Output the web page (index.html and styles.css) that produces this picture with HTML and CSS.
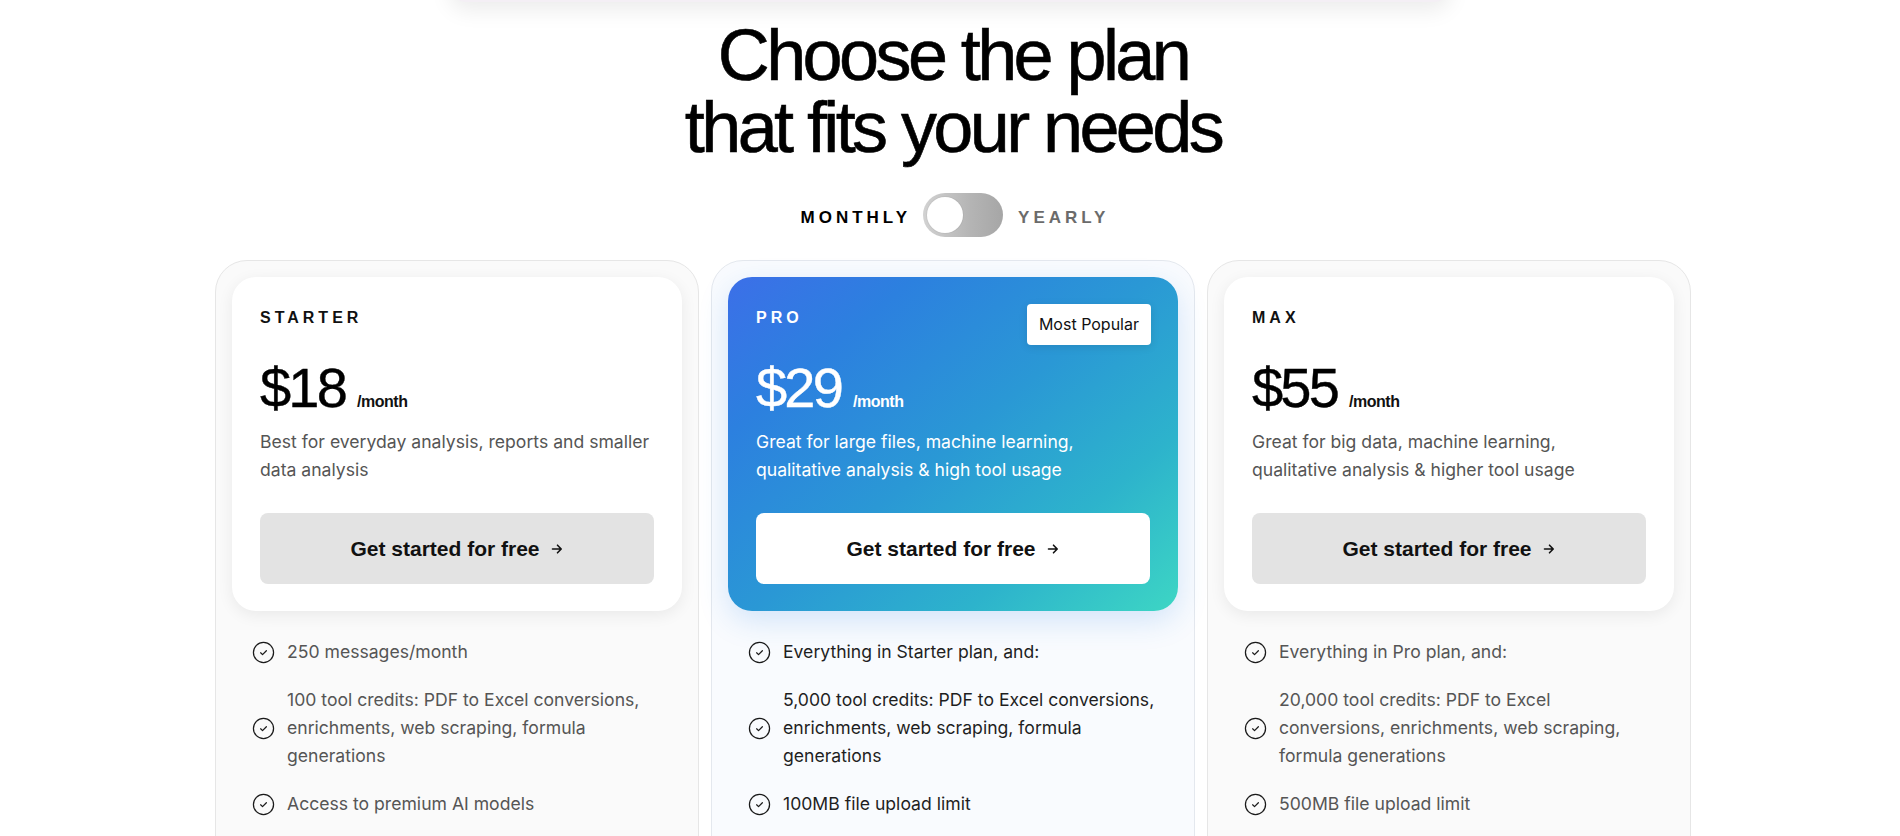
FILE: index.html
```html
<!DOCTYPE html>
<html lang="en">
<head>
<meta charset="utf-8">
<title>Pricing</title>
<link rel="stylesheet" href="styles.css">
</head>
<body>
<div class="topbar"></div>
<main class="page">
  <h1 class="title"><span class="title-line">Choose the plan</span><span class="title-line">that fits your needs</span></h1>

  <div class="billing">
    <span class="billing-label is-active">MONTHLY</span>
    <span class="switch"><span class="knob"></span></span>
    <span class="billing-label">YEARLY</span>
  </div>

  <div class="plans">
    <section class="plan">
      <div class="plan-head">
        <div class="plan-name">STARTER</div>
        <div class="price-row"><span class="price">$18</span><span class="per">/month</span></div>
        <p class="desc">Best for everyday analysis, reports and smaller data analysis</p>
        <a class="cta" href="#">Get started for free
          <svg class="arrow" viewBox="0 0 14 14" width="14" height="14"><path d="M2.5 7h8.5M7.5 3.2 11.2 7l-3.7 3.8" fill="none" stroke="currentColor" stroke-width="1.6" stroke-linecap="round" stroke-linejoin="round"/></svg>
        </a>
      </div>
      <ul class="features">
        <li><svg class="check" viewBox="0 0 24 24"><circle cx="12" cy="12" r="10.5"/><path d="M9 12.3l2 1.9 4-4"/></svg><span>250 messages/month</span></li>
        <li><svg class="check" viewBox="0 0 24 24"><circle cx="12" cy="12" r="10.5"/><path d="M9 12.3l2 1.9 4-4"/></svg><span>100 tool credits: PDF to Excel conversions, enrichments, web scraping, formula generations</span></li>
        <li><svg class="check" viewBox="0 0 24 24"><circle cx="12" cy="12" r="10.5"/><path d="M9 12.3l2 1.9 4-4"/></svg><span>Access to premium AI models</span></li>
      </ul>
    </section>

    <section class="plan plan--featured">
      <div class="plan-head">
        <div class="plan-name">PRO</div>
        <span class="badge">Most Popular</span>
        <div class="price-row"><span class="price">$29</span><span class="per">/month</span></div>
        <p class="desc">Great for large files, machine learning, qualitative analysis &amp; high tool usage</p>
        <a class="cta" href="#">Get started for free
          <svg class="arrow" viewBox="0 0 14 14" width="14" height="14"><path d="M2.5 7h8.5M7.5 3.2 11.2 7l-3.7 3.8" fill="none" stroke="currentColor" stroke-width="1.6" stroke-linecap="round" stroke-linejoin="round"/></svg>
        </a>
      </div>
      <ul class="features">
        <li><svg class="check" viewBox="0 0 24 24"><circle cx="12" cy="12" r="10.5"/><path d="M9 12.3l2 1.9 4-4"/></svg><span>Everything in Starter plan, and:</span></li>
        <li><svg class="check" viewBox="0 0 24 24"><circle cx="12" cy="12" r="10.5"/><path d="M9 12.3l2 1.9 4-4"/></svg><span>5,000 tool credits: PDF to Excel conversions, enrichments, web scraping, formula generations</span></li>
        <li><svg class="check" viewBox="0 0 24 24"><circle cx="12" cy="12" r="10.5"/><path d="M9 12.3l2 1.9 4-4"/></svg><span>100MB file upload limit</span></li>
      </ul>
    </section>

    <section class="plan">
      <div class="plan-head">
        <div class="plan-name">MAX</div>
        <div class="price-row"><span class="price">$55</span><span class="per">/month</span></div>
        <p class="desc">Great for big data, machine learning, qualitative analysis &amp; higher tool usage</p>
        <a class="cta" href="#">Get started for free
          <svg class="arrow" viewBox="0 0 14 14" width="14" height="14"><path d="M2.5 7h8.5M7.5 3.2 11.2 7l-3.7 3.8" fill="none" stroke="currentColor" stroke-width="1.6" stroke-linecap="round" stroke-linejoin="round"/></svg>
        </a>
      </div>
      <ul class="features">
        <li><svg class="check" viewBox="0 0 24 24"><circle cx="12" cy="12" r="10.5"/><path d="M9 12.3l2 1.9 4-4"/></svg><span>Everything in Pro plan, and:</span></li>
        <li><svg class="check" viewBox="0 0 24 24"><circle cx="12" cy="12" r="10.5"/><path d="M9 12.3l2 1.9 4-4"/></svg><span>20,000 tool credits: PDF to Excel conversions, enrichments, web scraping, formula generations</span></li>
        <li><svg class="check" viewBox="0 0 24 24"><circle cx="12" cy="12" r="10.5"/><path d="M9 12.3l2 1.9 4-4"/></svg><span>500MB file upload limit</span></li>
      </ul>
    </section>
  </div>
</main>
</body>
</html>
```

FILE: styles.css
```css
* { box-sizing: border-box; }

html, body {
  margin: 0;
  padding: 0;
  background: #ffffff;
  color: #0a0a0a;
  font-family: "Liberation Sans", Arial, sans-serif;
}

.topbar {
  position: absolute;
  top: -70px;
  left: 50%;
  width: 1000px;
  margin-left: -500px;
  height: 72px;
  background: #f4eff5;
  border-radius: 0 0 16px 16px;
  box-shadow: 0 8px 22px rgba(0, 0, 0, 0.08);
  z-index: 2;
}

.page {
  height: 836px;
  overflow: hidden;
  padding: 19px 0 0 6px;
  display: flex;
  flex-direction: column;
  align-items: center;
}

.title {
  margin: 0;
  font-size: 72px;
  font-weight: 400;
  letter-spacing: -0.05em;
  text-align: center;
  color: #000;
  -webkit-text-stroke: 0.6px #000;
}

.title-line {
  display: block;
  height: 72px;
  line-height: 72px;
}

.billing {
  margin-top: 30px;
  display: flex;
  align-items: center;
  gap: 12px;
  padding-left: 4px;
}

.billing-label {
  margin-top: 5px;
  font-size: 17px;
  font-weight: 700;
  letter-spacing: 4px;
  color: #6b6b6b;
}

.billing-label.is-active { color: #000; }

.switch {
  width: 80px;
  height: 44px;
  margin-right: 3px;
  padding: 4px;
  border-radius: 22px;
  background: linear-gradient(90deg, #d2d2d2 0%, #b4b4b4 60%, #a6a6a6 100%);
  display: flex;
  align-items: center;
}

.knob {
  width: 36px;
  height: 36px;
  border-radius: 50%;
  background: #fff;
  box-shadow: 0 0 0 1px rgba(0, 0, 0, 0.04);
}

.plans {
  margin-top: 23px;
  display: grid;
  grid-template-columns: repeat(3, 484px);
  gap: 12px;
}

.plan {
  background: #fafafa;
  border: 1px solid #e6e6e6;
  border-radius: 32px;
  padding: 16px;
}

.plan-head {
  position: relative;
  background: #fff;
  border-radius: 24px;
  padding: 30px 28px 27px;
  box-shadow: 0 4px 16px rgba(0, 0, 0, 0.07);
}

.plan-name {
  font-size: 16px;
  line-height: 22px;
  font-weight: 700;
  letter-spacing: 4px;
  color: #111;
}

.price-row {
  margin-top: 31px;
  display: flex;
  align-items: baseline;
  gap: 12px;
}

.price {
  font-size: 56px;
  line-height: 56px;
  letter-spacing: -0.05em;
  color: #000;
  -webkit-text-stroke: 0.4px currentColor;
}

.per {
  font-size: 16px;
  font-weight: 700;
  letter-spacing: -0.03em;
  color: #111;
}

.desc {
  margin: 12px 0 0;
  max-width: 392px;
  font-family: Inter, "Noto Sans", sans-serif;
  font-size: 17.6px;
  line-height: 28px;
  color: #555;
}

.cta {
  margin-top: 29px;
  height: 71px;
  border-radius: 8px;
  background: #e3e3e3;
  display: flex;
  align-items: center;
  justify-content: center;
  gap: 10px;
  font-size: 21px;
  font-weight: 700;
  color: #111;
  text-decoration: none;
}

.arrow { display: block; }

.features {
  list-style: none;
  margin: 0;
  padding: 27px 17px 40px 20px;
  display: flex;
  flex-direction: column;
  gap: 20px;
}

.features li {
  display: flex;
  align-items: center;
  gap: 12px;
  font-family: Inter, "Noto Sans", sans-serif;
  font-size: 17.6px;
  line-height: 28px;
  color: #555;
}

.check {
  width: 23px;
  height: 23px;
  flex-shrink: 0;
  fill: none;
  stroke: #1a1a1a;
  stroke-width: 1.3;
  stroke-linecap: round;
  stroke-linejoin: round;
}

/* featured plan */
.plan--featured {
  background: #f9fbfe;
  border-color: #e4e8ee;
}

.plan--featured .plan-head {
  background: linear-gradient(140deg, #3c6fe8 0%, #2c80df 22%, #2a98d5 50%, #2db3cc 75%, #3dd6c4 100%);
  box-shadow: 0 10px 30px rgba(40, 130, 230, 0.18);
  color: #fff;
}

.plan--featured .plan-name,
.plan--featured .price,
.plan--featured .per,
.plan--featured .desc { color: #fff; }

.plan--featured .cta { background: #fff; }

.plan--featured .features li { color: #1f1f1f; }

.badge {
  position: absolute;
  top: 27px;
  right: 27px;
  height: 41px;
  padding: 0 12px;
  line-height: 41px;
  border-radius: 4px;
  background: #fff;
  color: #111;
  font-family: Inter, "Noto Sans", sans-serif;
  font-size: 16px;
  box-shadow: 0 2px 8px rgba(0, 0, 0, 0.1);
}
```
